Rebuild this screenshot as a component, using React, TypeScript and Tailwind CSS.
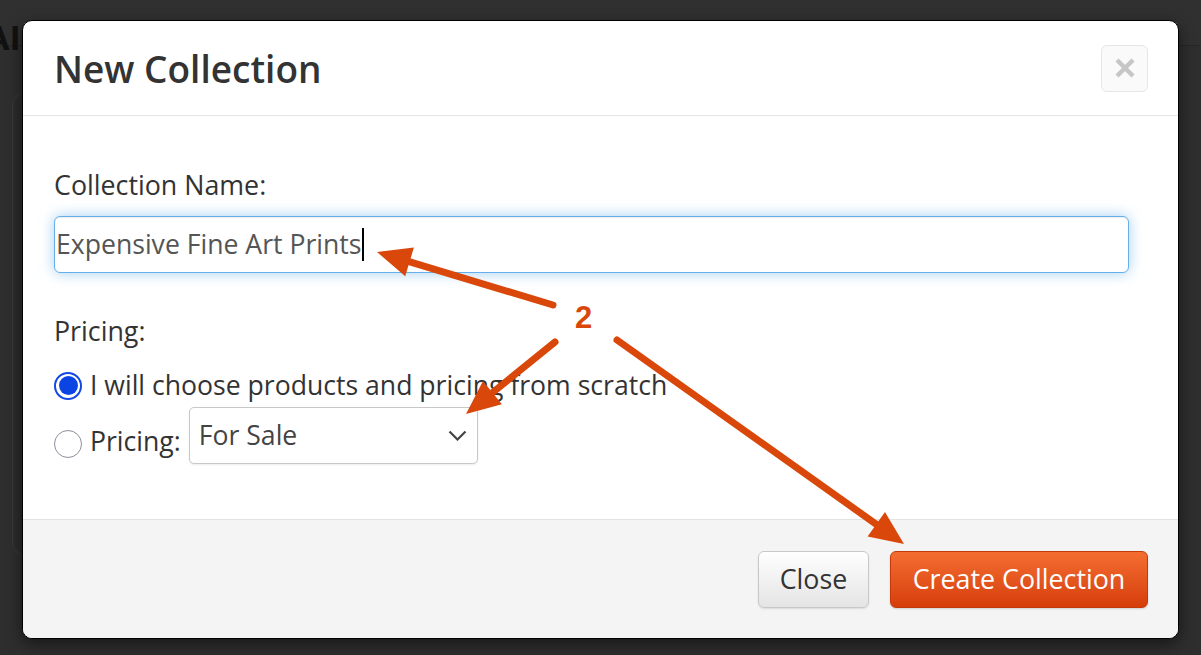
import React from 'react';

const ORANGE = '#d9480a';

type Pt = [number, number];

// arrow drawn from tail to tip, with a filled triangular head
const Arrow: React.FC<{ from: Pt; to: Pt }> = ({ from, to }) => {
    const [x1, y1] = from;
    const [x2, y2] = to;
    const len = Math.hypot(x2 - x1, y2 - y1);
    const ux = (x2 - x1) / len;
    const uy = (y2 - y1) / len;
    const headLen = 34;
    const headW = 15;
    const bx = x2 - ux * headLen;
    const by = y2 - uy * headLen;
    const pts = [
        [x2, y2],
        [bx - uy * headW, by + ux * headW],
        [bx + uy * headW, by - ux * headW],
    ]
        .map((p) => p.join(','))
        .join(' ');
    return (
        <g>
            <line x1={x1} y1={y1} x2={bx + ux * 4} y2={by + uy * 4} stroke={ORANGE} strokeWidth={7} strokeLinecap="round" />
            <polygon points={pts} fill={ORANGE} />
        </g>
    );
};

const Radio: React.FC<{ checked?: boolean }> = ({ checked }) =>
    checked ? (
        <span className="flex h-[28px] w-[28px] shrink-0 items-center justify-center rounded-full border-2 border-[#1447e6] bg-white">
            <span className="h-[19px] w-[19px] rounded-full bg-[#0b44e3]" />
        </span>
    ) : (
        <span className="block h-[28px] w-[28px] shrink-0 rounded-full border-[1.5px] border-[#8f8f9d] bg-white" />
    );

export default function App() {
    return (
        <div
            className="relative h-[655px] w-full overflow-hidden bg-[#2e2e2e]"
            style={{ fontFamily: '"Open Sans", "Liberation Sans", sans-serif' }}
        >
            {/* page behind the backdrop */}
            <div className="h-[46px] border-b border-[#262626] bg-[#303030] pt-[20px]">
                <span className="-ml-[14px] text-[34px] font-bold leading-none text-[#111]">AI</span>
            </div>
            <div className="ml-[12px] mt-[46px] h-[464px] w-[400px] rounded-[14px] border border-[#3a3a3a] bg-[#2c2c2c]" />

            {/* modal */}
            <div className="absolute left-[22px] top-[20px] flex h-[619px] w-[1157px] flex-col overflow-hidden rounded-[10px] border border-black bg-white shadow-[0_5px_15px_rgba(0,0,0,0.5)]">
                <div className="flex h-[95px] shrink-0 items-center justify-between border-b border-[#e5e5e5] pl-[31px] pr-[30px]">
                    <h2 className="text-[37px] font-semibold leading-none text-[#333]">New Collection</h2>
                    <button className="flex h-[47px] w-[47px] items-center justify-center rounded-[6px] border border-[#e6e6e6] bg-[#fafafa]">
                        <svg width="20" height="20" viewBox="0 0 20 20">
                            <path d="M2 2 L18 18 M18 2 L2 18" stroke="#c6c6c6" strokeWidth="4.5" strokeLinecap="butt" />
                        </svg>
                    </button>
                </div>

                <div className="flex-1 pl-[31px] pr-[49px] pt-[56px] text-[#333]">
                    <label className="block text-[26.8px] leading-none">Collection Name:</label>
                    <div className="mt-[17px] flex h-[57px] items-center rounded-[6px] border border-[#66afe9] bg-white pl-[1px] shadow-[inset_0_1px_1px_rgba(0,0,0,0.075),0_0_14px_rgba(102,175,233,0.6)]">
                        <span className="text-[26.6px] leading-none text-[#555]">Expensive Fine Art Prints</span>
                        <span className="ml-[1px] h-[33px] w-[1.5px] bg-black" />
                    </div>

                    <label className="mt-[45px] block text-[26.8px] leading-none">Pricing:</label>
                    <div className="mt-[27px] flex items-center gap-[8px]">
                        <Radio checked />
                        <span className="text-[26.6px] leading-none">I will choose products and pricing from scratch</span>
                    </div>
                    <div className="mt-[7px] flex items-start">
                        <span className="mt-[23px]">
                            <Radio />
                        </span>
                        <span className="ml-[8px] mt-[21px] text-[26.6px] leading-none">Pricing:</span>
                        <div className="ml-[8px] flex h-[57px] w-[289px] items-center justify-between rounded-[5px] border border-[#c8c8c8] bg-white pl-[9px] pr-[10px] shadow-[0_1px_2px_rgba(0,0,0,0.08)]">
                            <span className="text-[26.6px] leading-none text-[#444]">For Sale</span>
                            <svg width="19" height="11" viewBox="0 0 19 11">
                                <path d="M1.5 1.5 L9.5 9.5 L17.5 1.5" fill="none" stroke="#444" strokeWidth="2.2" />
                            </svg>
                        </div>
                    </div>
                </div>

                <div className="flex h-[119px] shrink-0 items-center justify-end gap-[21px] border-t border-[#e3e3e3] bg-[#f4f4f4] pr-[30px]">
                    <button className="h-[57px] w-[111px] rounded-[6px] border border-[#c8c8c8] bg-gradient-to-b from-white to-[#e4e4e4] text-[26.8px] text-[#333] shadow-[0_1px_2px_rgba(0,0,0,0.1)]">
                        Close
                    </button>
                    <button className="h-[57px] w-[258px] rounded-[6px] border border-[#c23a0c] bg-gradient-to-b from-[#f46d30] to-[#d63d08] text-[26.8px] text-white shadow-[0_1px_2px_rgba(0,0,0,0.15)]">
                        Create Collection
                    </button>
                </div>
            </div>

            {/* annotation overlay */}
            <svg className="pointer-events-none absolute left-0 top-0" width="1201" height="655">
                <Arrow from={[553, 305]} to={[377, 252]} />
                <Arrow from={[555, 342]} to={[466, 414]} />
                <Arrow from={[617, 340]} to={[904, 544]} />
                <text x="575" y="328" fill={ORANGE} fontSize="31" fontWeight="700" fontFamily="'Liberation Sans', Arial, sans-serif">
                    2
                </text>
            </svg>
        </div>
    );
}
